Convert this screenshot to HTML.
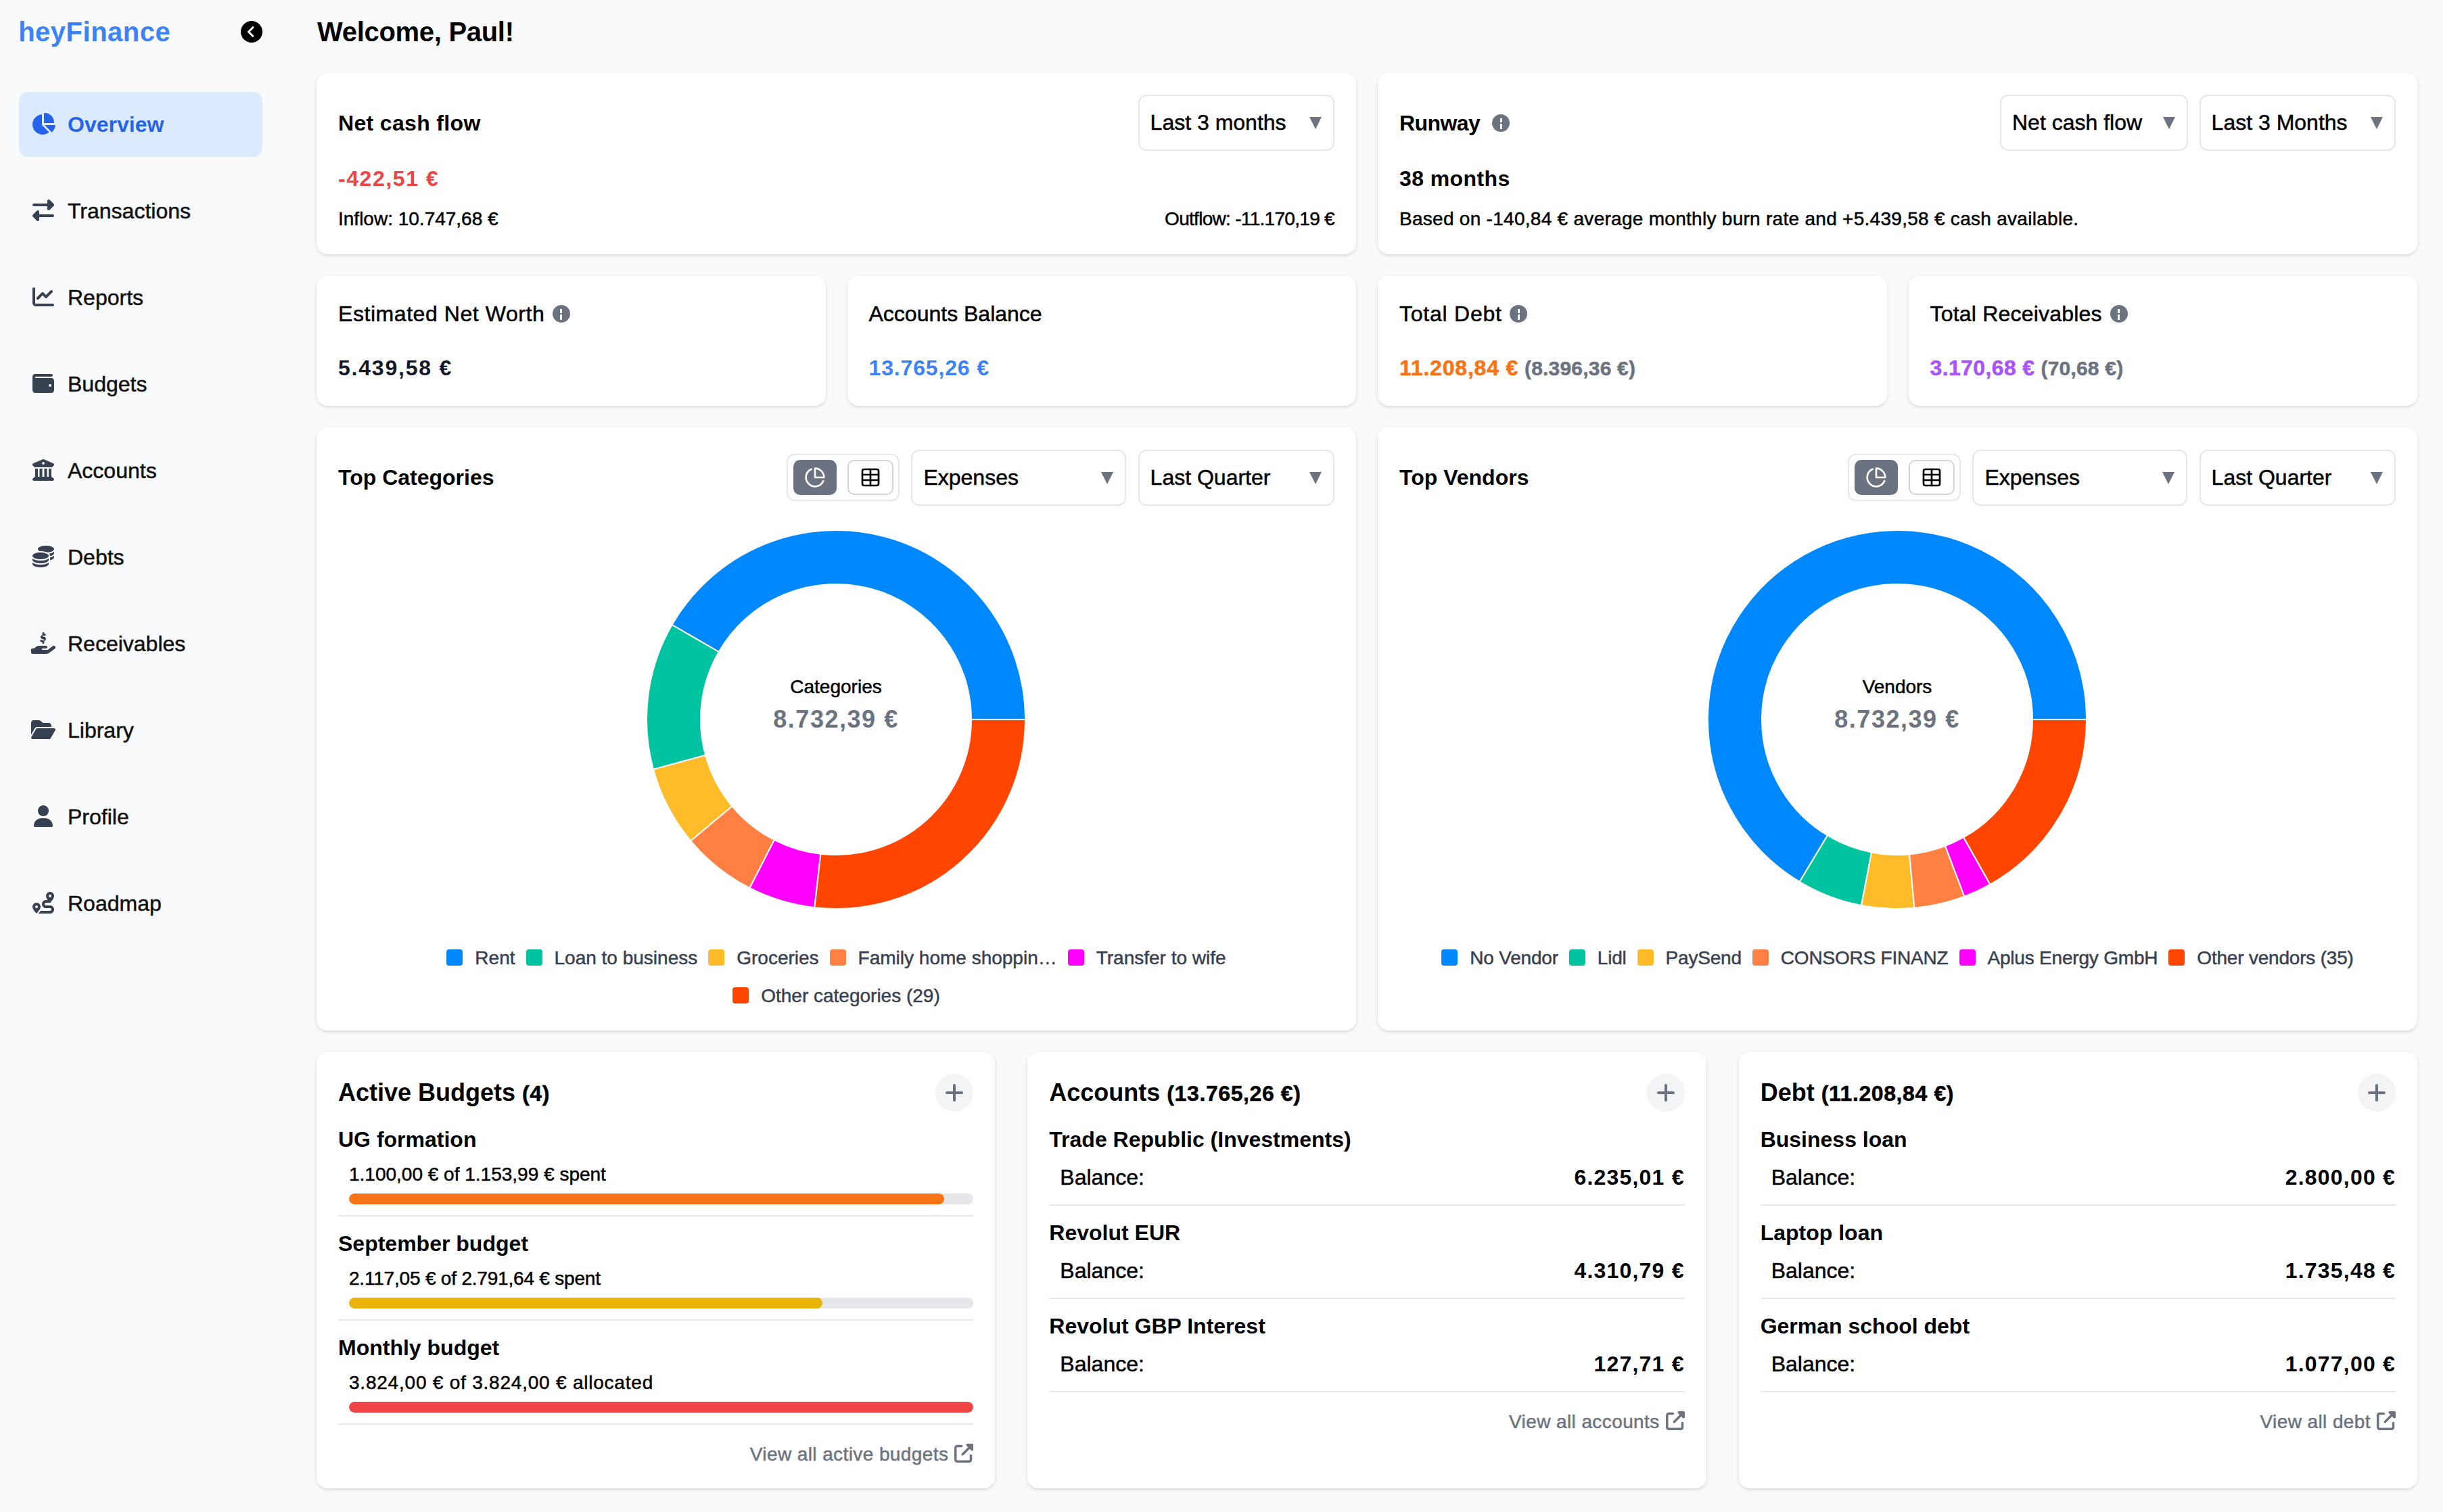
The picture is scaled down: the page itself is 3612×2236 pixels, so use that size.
<!DOCTYPE html>
<html><head><meta charset="utf-8"><style>
*{box-sizing:border-box;margin:0;padding:0}
html,body{width:1806px;height:1118px;overflow:hidden}
@media (min-width:3000px){html{zoom:2}}
body{background:#f9fafb;font-family:"Liberation Sans",sans-serif;color:#000;position:relative}
body *{-webkit-text-stroke:0.25px currentColor}
[style*="font-weight:bold"],.logo,.welcome,.title,.ctr2,.c4 .h,.nm,.bal b,.nav.active .tx{-webkit-text-stroke:0}
.abs{position:absolute}
.logo{left:13.6px;top:9.5px;font-size:20px;font-weight:bold;color:#3b82f6;line-height:28px;letter-spacing:0.25px}
.nav{position:absolute;left:14px;width:180px;height:48px;border-radius:7px}
.nav.active{background:#dbeafe}
.nav svg{position:absolute;left:8px;top:15.5px}
.nav .tx{position:absolute;left:36px;top:12px;font-size:16px;line-height:24px;color:#111}
.nav.active .tx{color:#2563eb;font-weight:bold}
.welcome{left:234.5px;top:9.5px;font-size:20px;font-weight:bold;line-height:28px;color:#000;letter-spacing:-0.15px}
.card{position:absolute;background:#fff;border-radius:8px;box-shadow:0 1px 3px 0 rgba(0,0,0,0.1),0 1px 2px -1px rgba(0,0,0,0.1)}
.title{font-size:16px;font-weight:bold;line-height:24px;color:#000}
.sel{position:absolute;height:41.5px;border:1px solid #e5e7eb;border-radius:6px;background:#fff;font-size:16px;line-height:39.5px;padding-left:8px;color:#000;white-space:nowrap}
.sel .arr{position:absolute;right:8.5px;top:15.5px;width:0;height:0;border-left:4.5px solid transparent;border-right:4.5px solid transparent;border-top:9px solid #6b7280}
.sm{font-size:14px;line-height:20px;color:#000;white-space:nowrap}
.info{display:inline-block;width:13px;height:13px;border-radius:50%;background:#6b7280;position:relative;vertical-align:middle}
.info:before{content:"";position:absolute;left:5.8px;top:3.1px;width:1.4px;height:3.2px;background:#fff}
.info:after{content:"";position:absolute;left:5.8px;top:7.2px;width:1.4px;height:4.1px;background:#fff}
.tg{position:absolute;width:83.5px;height:35.3px;border:1px solid #e5e7eb;border-radius:6px;background:#fff}
.tga{position:absolute;left:3.8px;top:3.7px;width:32px;height:25.8px;border-radius:5px;background:#6b7280}
.tgb{position:absolute;left:44px;top:3.7px;width:33.8px;height:25.8px;border-radius:5px;border:1px solid #d1d5db;background:#fff}
.tga svg,.tgb svg{position:absolute;left:50%;top:50%;margin:-8px 0 0 -8px}
.ctr1{width:200px;text-align:center;font-size:14px;line-height:20px;color:#000}
.ctr2{width:200px;text-align:center;font-size:18px;font-weight:bold;line-height:28px;color:#6b7280;letter-spacing:0.77px}
.leg{text-align:center;font-size:14px;line-height:20px;color:#374151;white-space:nowrap}
.li{display:inline-block;margin:0 4px}
.li i{display:inline-block;width:12px;height:12px;border-radius:2px;vertical-align:-1px;margin-right:9px}
.c4{padding:16px}
.c4 .h{font-size:18px;font-weight:bold;line-height:28px;color:#000}
.plus{position:absolute;right:16px;top:16px;width:28px;height:28px;border-radius:50%;background:#f3f4f6}
.plus svg{position:absolute;left:7px;top:6px}
.it{margin-top:8px;padding-bottom:8px;border-bottom:1px solid #e5e7eb}
.nm{font-size:16px;font-weight:bold;line-height:24px;color:#000}
.bt{margin-top:4px;padding-left:8px;font-size:14px;line-height:20px;color:#000}
.bar{margin:4px 0 0 8px;height:8px;border-radius:4px;background:#e5e7eb;overflow:hidden}
.bar div{height:8px;border-radius:4px}
.bal{margin-top:4px;padding-left:8px;display:flex;justify-content:space-between;font-size:16px;line-height:24px;color:#000}
.bal b{font-weight:bold;letter-spacing:0.6px}
.hp{font-size:16px;letter-spacing:0.3px}
.va{margin-top:12px;text-align:right;font-size:14px;line-height:20px;color:#6b7280;letter-spacing:0.2px}
.va svg{vertical-align:-1.5px;margin-left:4.5px}
</style></head><body>
<div class="abs logo">heyFinance</div><svg style="position:absolute;left:178px;top:15.5px" width="16" height="16" viewBox="0 0 512 512"><path fill="#000" d="M512 256A256 256 0 1 0 0 256a256 256 0 1 0 512 0zM271 135c9.4-9.4 24.6-9.4 33.9 0s9.4 24.6 0 33.9l-87 87 87 87c9.4 9.4 9.4 24.6 0 33.9s-24.6 9.4-33.9 0L167 273c-9.4-9.4-9.4-24.6 0-33.9L271 135z"/></svg><div class="nav active" style="top:68px"><svg style="" width="20" height="16" viewBox="0 0 576 512"><path fill="#2563eb" d="M304 240V16.6c0-9 7-16.6 16-16.6C443.7 0 544 100.3 544 224c0 9-7.6 16-16.6 16H304zM32 272C32 150.7 122.1 50.3 239 34.3c9.2-1.3 17 6.1 17 15.4V288L412.5 444.5c6.7 6.7 6.2 17.7-1.5 23.1C371.8 495.6 323.8 512 272 512C139.5 512 32 404.6 32 272zm526.4 16c9.3 0 16.6 7.8 15.4 17c-7.7 55.9-34.6 105.6-73.9 142.3c-6 5.6-15.4 5.2-21.2-.7L320 288H558.4z"/></svg><div class="tx">Overview</div></div><div class="nav" style="top:132px"><svg style="" width="20" height="16" viewBox="0 0 512 512"><path fill="#374151" d="M32 96l320 0V32c0-12.9 7.8-24.6 19.8-29.6s25.7-2.2 34.9 6.9l96 96c6 6 9.4 14.1 9.4 22.6s-3.4 16.6-9.4 22.6l-96 96c-9.2 9.2-22.9 11.9-34.9 6.9s-19.8-16.6-19.8-29.6V160L32 160c-17.7 0-32-14.3-32-32s14.3-32 32-32zM480 352c17.7 0 32 14.3 32 32s-14.3 32-32 32H160v64c0 12.9-7.8 24.6-19.8 29.6s-25.7 2.2-34.9-6.9l-96-96c-6-6-9.4-14.1-9.4-22.6s3.4-16.6 9.4-22.6l96-96c9.2-9.2 22.9-11.9 34.9-6.9s19.8 16.6 19.8 29.6l0 64H480z"/></svg><div class="tx">Transactions</div></div><div class="nav" style="top:196px"><svg style="" width="20" height="16" viewBox="0 0 512 512"><path fill="#374151" d="M64 64c0-17.7-14.3-32-32-32S0 46.3 0 64V400c0 44.2 35.8 80 80 80H480c17.7 0 32-14.3 32-32s-14.3-32-32-32H80c-8.8 0-16-7.2-16-16V64zm406.6 86.6c12.5-12.5 12.5-32.8 0-45.3s-32.8-12.5-45.3 0L320 210.7l-57.4-57.4c-12.5-12.5-32.8-12.5-45.3 0l-112 112c-12.5 12.5-12.5 32.8 0 45.3s32.8 12.5 45.3 0L240 221.3l57.4 57.4c12.5 12.5 32.8 12.5 45.3 0l128-128z"/></svg><div class="tx">Reports</div></div><div class="nav" style="top:260px"><svg style="" width="20" height="16" viewBox="0 0 512 512"><path fill="#374151" d="M64 32C28.7 32 0 60.7 0 96V416c0 35.3 28.7 64 64 64H448c35.3 0 64-28.7 64-64V192c0-35.3-28.7-64-64-64H80c-8.8 0-16-7.2-16-16s7.2-16 16-16H448c17.7 0 32-14.3 32-32s-14.3-32-32-32H64zM416 272a32 32 0 1 1 0 64 32 32 0 1 1 0-64z"/></svg><div class="tx">Budgets</div></div><div class="nav" style="top:324px"><svg style="" width="20" height="16" viewBox="0 0 512 512"><path fill="#374151" d="M243.4 2.6l-224 96c-14 6-21.8 21-18.7 35.8S16.8 160 32 160v8c0 13.3 10.7 24 24 24H456c13.3 0 24-10.7 24-24v-8c15.2 0 28.3-10.7 31.3-25.6s-4.8-29.9-18.7-35.8l-224-96c-8-3.4-17.2-3.4-25.2 0zM128 224H64V420.3c-.6 .3-1.200 .7-1.8 1.1l-48 32c-11.7 7.8-17 22.4-12.9 35.9S17.9 512 32 512H480c14.1 0 26.5-9.2 30.6-22.7s-1.1-28.1-12.9-35.9l-48-32c-.6-.4-1.2-.7-1.8-1.1V224H384V416H344V224H280V416H232V224H168V416H128V224zM256 64a32 32 0 1 1 0 64 32 32 0 1 1 0-64z"/></svg><div class="tx">Accounts</div></div><div class="nav" style="top:388px"><svg style="" width="20" height="16" viewBox="0 0 512 512"><path fill="#374151" d="M512 80c0 18-14.3 34.6-38.4 48c-29.1 16.1-72.5 27.5-122.3 30.9c-3.7-1.8-7.4-3.5-11.3-5C300.6 137.4 248.2 128 192 128c-8.3 0-16.4 .2-24.5 .6l-1.1-.6C142.3 114.6 128 98 128 80c0-44.2 86-80 192-80S512 35.8 512 80zM160.7 161.1c10.2-.7 20.7-1.1 31.3-1.1c62.2 0 117.4 12.3 152.5 31.4C369.3 204.9 384 221.7 384 240c0 4-.7 7.9-2.1 11.7c-4.6 13.200-17 25.3-35 35.5c0 0 0 0 0 0c-.1 .1-.3 .1-.4 .2l0 0 0 0c-.3 .2-.6 .3-.9 .5c-35 19.4-90.8 32-153.6 32c-59.6 0-112.9-11.3-148.2-29.1c-1.9-.9-3.7-1.9-5.5-2.9C14.3 274.6 0 258 0 240c0-34.8 53.4-64.5 128-75.4c10.5-1.5 21.4-2.7 32.7-3.5zM416 240c0-21.9-10.6-39.9-24.1-53.4c28.3-4.4 54.2-11.4 76.200-20.5c16.3-6.8 31.5-15.2 43.9-25.5V176c0 19.3-16.5 37.1-43.8 50.9c-14.6 7.4-32.4 13.7-52.4 18.5c.1-1.8 .2-3.5 .2-5.3zm-32 96c0 18-14.3 34.6-38.4 48c-1.8 1-3.6 1.9-5.5 2.9C304.9 404.7 251.6 416 192 416c-62.8 0-118.6-12.6-153.6-32C14.3 370.6 0 354 0 336V300.6c12.5 10.3 27.6 18.7 43.9 25.5C83.4 342.6 135.8 352 192 352s108.6-9.4 148.1-25.9c7.8-3.2 15.3-6.9 22.4-10.9c6.1-3.4 11.8-7.200 17.200-11.2c1.5-1.1 2.9-2.3 4.3-3.4V304v5.7V336zm32 0V304 278.1c19-4.2 36.5-9.5 52.1-16c16.3-6.8 31.5-15.2 43.9-25.5V272c0 10.5-5 21-14.9 30.9c-16.3 16.3-45 29.7-81.3 38.4c.1-1.7 .2-3.5 .2-5.3zM192 448c56.2 0 108.6-9.4 148.1-25.9c16.3-6.8 31.5-15.2 43.9-25.5V432c0 44.2-86 80-192 80S0 476.2 0 432V396.6c12.5 10.3 27.6 18.7 43.9 25.5C83.4 438.6 135.8 448 192 448z"/></svg><div class="tx">Debts</div></div><div class="nav" style="top:452px"><svg style="" width="20" height="16" viewBox="0 0 576 512"><path fill="#374151" d="M312 24V34.5c6.4 1.2 12.6 2.7 18.2 4.2c12.8 3.4 20.4 16.6 17 29.4s-16.6 20.4-29.4 17c-10.9-2.9-21.1-4.9-30.2-5c-7.3-.1-14.7 1.7-19.4 4.4c-2.1 1.3-3.1 2.4-3.5 3c-.3 .5-.7 1.2-.7 2.8c0 .3 0 .5 0 .6c.2 .2 .9 1.2 3.3 2.6c5.8 3.5 14.4 6.2 26.4 9.8l.9 .3c10.2 3.1 23.8 7.2 34.6 14c12 7.6 22.6 19.7 22.6 39.4c0 19.6-10.5 33.5-23.2 41.6c-5.9 3.7-12.1 6.2-18.3 7.8V247.5c0 13.3-10.7 24-24 24s-24-10.7-24-24V236.2c-9.6-2.1-18.4-5-26.2-7.6c-2.2-.7-4.4-1.4-6.4-2.1c-12.6-4-19.6-17.5-15.6-30.1s17.5-19.6 30.1-15.6c2.6 .8 5 1.6 7.4 2.4c14.4 4.6 25.1 8.1 36.5 8.6c8 .3 15-1.4 19.1-4c1.7-1.1 2.6-2.1 3-2.8c.4-.6 .9-1.7 .8-3.9l0-.2c0-1.1 0-2.1-3.8-4.5c-5.6-3.5-13.8-6.2-25.8-9.9l-1.3-.4c-9.8-3-22.9-6.9-33.3-13.3c-12-7.3-23.3-19.2-23.4-38.8c-.1-20.6 11.5-34.8 24.6-42.7c5.5-3.3 11.4-5.6 17.2-7.2V24c0-13.3 10.7-24 24-24s24 10.7 24 24zM568.2 336.3c13.1 17.8 9.3 42.8-8.5 55.9L433.1 485.5c-23.4 17.2-51.6 26.5-80.7 26.5H192 32c-17.7 0-32-14.3-32-32V416c0-17.7 14.3-32 32-32H68.8l44.9-36c22.7-18.2 50.9-28 80-28H272h16 64c17.7 0 32 14.3 32 32s-14.3 32-32 32H288 272c-8.8 0-16 7.2-16 16s7.2 16 16 16H392.6l119.7-88.2c17.8-13.1 42.8-9.3 55.9 8.5zM193.6 384l0 0-.9 0c.3 0 .6 0 .9 0z"/></svg><div class="tx">Receivables</div></div><div class="nav" style="top:516px"><svg style="" width="20" height="16" viewBox="0 0 576 512"><path fill="#374151" d="M88.7 223.8L0 375.8V96C0 60.7 28.7 32 64 32H181.5c17 0 33.3 6.7 45.3 18.7l26.5 26.5c12 12 28.3 18.7 45.3 18.7H416c35.3 0 64 28.7 64 64v32H144c-22.8 0-43.8 12.1-55.3 31.8zm27.6 16.1C122.1 230 132.6 224 144 224H544c11.5 0 22 6.1 27.7 16.1s5.7 22.2-.1 32.1l-112 192C453.9 474 443.4 480 432 480H32c-11.5 0-22-6.1-27.7-16.1s-5.7-22.2 .1-32.1l112-192z"/></svg><div class="tx">Library</div></div><div class="nav" style="top:580px"><svg style="" width="20" height="16" viewBox="0 0 448 512"><path fill="#374151" d="M224 256A128 128 0 1 0 224 0a128 128 0 1 0 0 256zm-45.7 48C79.8 304 0 383.8 0 482.3C0 498.7 13.3 512 29.7 512H418.3c16.4 0 29.7-13.3 29.7-29.7C448 383.8 368.2 304 269.7 304H178.3z"/></svg><div class="tx">Profile</div></div><div class="nav" style="top:644px"><svg style="" width="20" height="16" viewBox="0 0 512 512"><path fill="#374151" d="M512 96c0 50.2-59.1 125.1-84.6 155c-3.8 4.4-9.4 6.1-14.5 5H320c-17.7 0-32 14.3-32 32s14.3 32 32 32h96c53 0 96 43 96 96s-43 96-96 96H139.6c8.7-9.9 19.3-22.6 30-36.8c6.3-8.4 12.8-17.6 19-27.2H416c17.7 0 32-14.3 32-32s-14.3-32-32-32H320c-53 0-96-43-96-96s43-96 96-96h39.8c-21-31.5-39.8-67.7-39.8-96c0-53 43-96 96-96s96 43 96 96zM117.1 489.1c-3.8 4.3-7.2 8.1-10.1 11.3l-1.8 2-.2-.2c-6 4.6-14.6 4-20-1.8C59.8 473 0 402.5 0 352c0-53 43-96 96-96s96 43 96 96c0 30-21.1 67-43.5 97.9c-10.7 14.7-21.7 28-30.8 38.5l-.6 .7zM128 352a32 32 0 1 0 -64 0 32 32 0 1 0 64 0zM416 128a32 32 0 1 0 0-64 32 32 0 1 0 0 64z"/></svg><div class="tx">Roadmap</div></div><div class="abs welcome">Welcome, Paul!</div>
<div class="card" style="left:234px;top:54px;width:768.5px;height:134px">
  <div class="abs title" style="left:16px;top:25px;letter-spacing:0.17px">Net cash flow</div>
  <div class="sel" style="left:607.3px;top:16.2px;width:145px">Last 3 months<span class="arr"></span></div>
  <div class="abs" style="left:16px;top:66px;font-size:16px;font-weight:bold;line-height:24px;color:#ef4444;letter-spacing:0.79px">-422,51 €</div>
  <div class="abs sm" style="left:16px;top:98px">Inflow: 10.747,68 €</div>
  <div class="abs sm" style="right:16px;top:98px;letter-spacing:-0.35px">Outflow: -11.170,19 €</div>
</div>
<div class="card" style="left:1018.5px;top:54px;width:768.5px;height:134px">
  <div class="abs title" style="left:16px;top:25px;letter-spacing:-0.3px">Runway <span class="info" style="margin-left:5px;margin-top:-3px"></span></div>
  <div class="sel" style="left:460px;top:16.2px;width:139px">Net cash flow<span class="arr"></span></div>
  <div class="sel" style="left:607.3px;top:16.2px;width:145px">Last 3 Months<span class="arr"></span></div>
  <div class="abs" style="left:16px;top:66px;font-size:16px;font-weight:bold;line-height:24px;color:#000;letter-spacing:0.2px">38 months</div>
  <div class="abs sm" style="left:16px;top:98px;letter-spacing:0.14px">Based on -140,84 € average monthly burn rate and +5.439,58 € cash available.</div>
</div>
<div class="card" style="left:234px;top:204px;width:376.25px;height:96px">
  <div class="abs" style="left:16px;top:16px;font-size:16px;line-height:24px;letter-spacing:0.28px">Estimated Net Worth <span class="info" style="margin-left:1px;margin-top:-3px"></span></div>
  <div class="abs" style="left:16px;top:56px;font-size:16px;font-weight:bold;line-height:24px;color:#111827;letter-spacing:0.89px">5.439,58 €</div>
</div>
<div class="card" style="left:626.25px;top:204px;width:376.25px;height:96px">
  <div class="abs" style="left:16px;top:16px;font-size:16px;line-height:24px">Accounts Balance</div>
  <div class="abs" style="left:16px;top:56px;font-size:16px;font-weight:bold;line-height:24px;color:#3b82f6;letter-spacing:0.42px">13.765,26 €</div>
</div>
<div class="card" style="left:1018.5px;top:204px;width:376.25px;height:96px">
  <div class="abs" style="left:16px;top:16px;font-size:16px;line-height:24px;letter-spacing:0.38px">Total Debt <span class="info" style="margin-left:1px;margin-top:-3px"></span></div>
  <div class="abs" style="left:16px;top:56px;font-size:16px;font-weight:bold;line-height:24px;color:#f97316"><span style="letter-spacing:0.4px">11.208,84 €</span> <span style="font-size:15px;color:#6b7280;letter-spacing:0.1px">(8.396,36 €)</span></div>
</div>
<div class="card" style="left:1410.75px;top:204px;width:376.25px;height:96px">
  <div class="abs" style="left:16px;top:16px;font-size:16px;line-height:24px;letter-spacing:0.1px">Total Receivables <span class="info" style="margin-left:1.5px;margin-top:-3px"></span></div>
  <div class="abs" style="left:16px;top:56px;font-size:16px;font-weight:bold;line-height:24px;color:#a855f7"><span style="letter-spacing:0.19px">3.170,68 €</span> <span style="font-size:15px;color:#6b7280;letter-spacing:0.1px">(70,68 €)</span></div>
</div>
<div class="card" style="left:234px;top:315.8px;width:768.5px;height:446px">
  <div class="abs title" style="left:16px;top:25px">Top Categories</div>
  <div class="tg" style="left:347.7px;top:19.5px"><div class="tga"><svg width="16" height="16" viewBox="0 0 24 24" fill="none" stroke="#fff" stroke-width="2" stroke-linecap="round" stroke-linejoin="round"><path d="M21.21 15.89A10 10 0 1 1 8 2.83"/><path d="M22 12A10 10 0 0 0 12 2v10z"/></svg></div><div class="tgb"><svg width="16" height="16" viewBox="0 0 24 24" fill="none" stroke="#000" stroke-width="2" stroke-linecap="round" stroke-linejoin="round"><path d="M12 3v18"/><rect width="18" height="18" x="3" y="3" rx="2"/><path d="M3 9h18"/><path d="M3 15h18"/></svg></div></div>
  <div class="sel" style="left:439.7px;top:16.6px;width:159px">Expenses<span class="arr"></span></div>
  <div class="sel" style="left:607.3px;top:16.6px;width:145px">Last Quarter<span class="arr"></span></div>
  <svg class="abs" style="left:234px;top:66px" width="300" height="300" viewBox="0 0 300 300"><path d="M290.00 150.00A140 140 0 0 0 28.76 80.00L63.40 100.00A100 100 0 0 1 250.00 150.00Z" fill="#0088FE" stroke="#fff" stroke-width="1"/><path d="M28.76 80.00A140 140 0 0 0 14.96 186.94L53.54 176.39A100 100 0 0 1 63.40 100.00Z" fill="#00C49F" stroke="#fff" stroke-width="1"/><path d="M14.96 186.94A140 140 0 0 0 42.60 239.80L73.28 214.14A100 100 0 0 1 53.54 176.39Z" fill="#FFBB28" stroke="#fff" stroke-width="1"/><path d="M42.60 239.80A140 140 0 0 0 86.22 274.63L104.45 239.02A100 100 0 0 1 73.28 214.14Z" fill="#FF8042" stroke="#fff" stroke-width="1"/><path d="M86.22 274.63A140 140 0 0 0 134.15 289.10L138.68 249.36A100 100 0 0 1 104.45 239.02Z" fill="#FF00FF" stroke="#fff" stroke-width="1"/><path d="M134.15 289.10A140 140 0 0 0 290.00 150.00L250.00 150.00A100 100 0 0 1 138.68 249.36Z" fill="#FF4500" stroke="#fff" stroke-width="1"/></svg>
  <div class="abs ctr1" style="left:284px;top:182.2px">Categories</div>
  <div class="abs ctr2" style="left:284px;top:202px">8.732,39 €</div>
  <div class="abs leg" style="left:0;top:382.5px;width:768.5px"><span class="li"><i style="background:#0088FE"></i>Rent</span><span class="li"><i style="background:#00C49F"></i>Loan to business</span><span class="li"><i style="background:#FFBB28"></i>Groceries</span><span class="li"><i style="background:#FF8042"></i>Family home shoppin…</span><span class="li"><i style="background:#FF00FF"></i>Transfer to wife</span></div><div class="abs leg" style="left:0;top:410.5px;width:768.5px"><span class="li"><i style="background:#FF4500"></i>Other categories (29)</span></div>
</div><div class="card" style="left:1018.5px;top:315.8px;width:768.5px;height:446px">
  <div class="abs title" style="left:16px;top:25px">Top Vendors</div>
  <div class="tg" style="left:347.7px;top:19.5px"><div class="tga"><svg width="16" height="16" viewBox="0 0 24 24" fill="none" stroke="#fff" stroke-width="2" stroke-linecap="round" stroke-linejoin="round"><path d="M21.21 15.89A10 10 0 1 1 8 2.83"/><path d="M22 12A10 10 0 0 0 12 2v10z"/></svg></div><div class="tgb"><svg width="16" height="16" viewBox="0 0 24 24" fill="none" stroke="#000" stroke-width="2" stroke-linecap="round" stroke-linejoin="round"><path d="M12 3v18"/><rect width="18" height="18" x="3" y="3" rx="2"/><path d="M3 9h18"/><path d="M3 15h18"/></svg></div></div>
  <div class="sel" style="left:439.7px;top:16.6px;width:159px">Expenses<span class="arr"></span></div>
  <div class="sel" style="left:607.3px;top:16.6px;width:145px">Last Quarter<span class="arr"></span></div>
  <svg class="abs" style="left:234px;top:66px" width="300" height="300" viewBox="0 0 300 300"><path d="M290.00 150.00A140 140 0 1 0 77.89 270.00L98.50 235.72A100 100 0 1 1 250.00 150.00Z" fill="#0088FE" stroke="#fff" stroke-width="1"/><path d="M77.89 270.00A140 140 0 0 0 123.53 287.47L131.09 248.20A100 100 0 0 1 98.50 235.72Z" fill="#00C49F" stroke="#fff" stroke-width="1"/><path d="M123.53 287.47A140 140 0 0 0 162.69 289.42L159.06 249.59A100 100 0 0 1 131.09 248.20Z" fill="#FFBB28" stroke="#fff" stroke-width="1"/><path d="M162.69 289.42A140 140 0 0 0 199.71 280.88L185.51 243.48A100 100 0 0 1 159.06 249.59Z" fill="#FF8042" stroke="#fff" stroke-width="1"/><path d="M199.71 280.88A140 140 0 0 0 218.73 271.97L199.09 237.12A100 100 0 0 1 185.51 243.48Z" fill="#FF00FF" stroke="#fff" stroke-width="1"/><path d="M218.73 271.97A140 140 0 0 0 290.00 150.00L250.00 150.00A100 100 0 0 1 199.09 237.12Z" fill="#FF4500" stroke="#fff" stroke-width="1"/></svg>
  <div class="abs ctr1" style="left:284px;top:182.2px">Vendors</div>
  <div class="abs ctr2" style="left:284px;top:202px">8.732,39 €</div>
  <div class="abs leg" style="letter-spacing:-0.1px;left:0;top:382.5px;width:768.5px"><span class="li"><i style="background:#0088FE"></i>No Vendor</span><span class="li"><i style="background:#00C49F"></i>Lidl</span><span class="li"><i style="background:#FFBB28"></i>PaySend</span><span class="li"><i style="background:#FF8042"></i>CONSORS FINANZ</span><span class="li"><i style="background:#FF00FF"></i>Aplus Energy GmbH</span><span class="li"><i style="background:#FF4500"></i>Other vendors (35)</span></div>
</div>
<div class="card c4" style="left:234px;top:778px;width:501.67px;height:322.7px">
  <div class="h">Active Budgets <span class="hp">(4)</span></div><div class="plus"><svg style="" width="14" height="16" viewBox="0 0 448 512"><path fill="#6b7280" d="M256 80c0-17.7-14.3-32-32-32s-32 14.3-32 32V224H48c-17.7 0-32 14.3-32 32s14.3 32 32 32H192V432c0 17.7 14.3 32 32 32s32-14.3 32-32V288H400c17.7 0 32-14.3 32-32s-14.3-32-32-32H256V80z"/></svg></div>
  <div class="it"><div class="nm">UG formation</div><div class="bt">1.100,00 € of 1.153,99 € spent</div><div class="bar"><div style="width:95.32%;background:#f97316"></div></div></div>
  <div class="it"><div class="nm">September budget</div><div class="bt" style="letter-spacing:-0.1px">2.117,05 € of 2.791,64 € spent</div><div class="bar"><div style="width:75.84%;background:#eab308"></div></div></div>
  <div class="it"><div class="nm">Monthly budget</div><div class="bt" style="letter-spacing:0.39px">3.824,00 € of 3.824,00 € allocated</div><div class="bar"><div style="width:100%;background:#ef4444"></div></div></div>
  <div class="va">View all active budgets<svg style="" width="14" height="14" viewBox="0 0 512 512"><path fill="#6b7280" d="M352 0c-12.9 0-24.6 7.8-29.6 19.8s-2.2 25.7 6.9 34.9L370.7 96 201.4 265.4c-12.5 12.5-12.5 32.8 0 45.3s32.8 12.5 45.3 0L416 141.3l41.4 41.4c9.2 9.2 22.9 11.9 34.9 6.9s19.8-16.6 19.8-29.6V32c0-17.7-14.3-32-32-32H352zM80 32C35.8 32 0 67.8 0 112V432c0 44.2 35.8 80 80 80H400c44.2 0 80-35.8 80-80V320c0-17.7-14.3-32-32-32s-32 14.3-32 32V432c0 8.8-7.2 16-16 16H80c-8.8 0-16-7.2-16-16V112c0-8.8 7.2-16 16-16H192c17.7 0 32-14.3 32-32s-14.3-32-32-32H80z"/></svg></div>
</div>
<div class="card c4" style="left:759.67px;top:778px;width:501.67px;height:322.7px">
  <div class="h">Accounts <span class="hp">(13.765,26 €)</span></div><div class="plus"><svg style="" width="14" height="16" viewBox="0 0 448 512"><path fill="#6b7280" d="M256 80c0-17.7-14.3-32-32-32s-32 14.3-32 32V224H48c-17.7 0-32 14.3-32 32s14.3 32 32 32H192V432c0 17.7 14.3 32 32 32s32-14.3 32-32V288H400c17.7 0 32-14.3 32-32s-14.3-32-32-32H256V80z"/></svg></div>
  <div class="it"><div class="nm">Trade Republic (Investments)</div><div class="bal"><span>Balance:</span><b>6.235,01 €</b></div></div>
  <div class="it"><div class="nm">Revolut EUR</div><div class="bal"><span>Balance:</span><b>4.310,79 €</b></div></div>
  <div class="it"><div class="nm">Revolut GBP Interest</div><div class="bal"><span>Balance:</span><b>127,71 €</b></div></div>
  <div class="va">View all accounts<svg style="" width="14" height="14" viewBox="0 0 512 512"><path fill="#6b7280" d="M352 0c-12.9 0-24.6 7.8-29.6 19.8s-2.2 25.7 6.9 34.9L370.7 96 201.4 265.4c-12.5 12.5-12.5 32.8 0 45.3s32.8 12.5 45.3 0L416 141.3l41.4 41.4c9.2 9.2 22.9 11.9 34.9 6.9s19.8-16.6 19.8-29.6V32c0-17.7-14.3-32-32-32H352zM80 32C35.8 32 0 67.8 0 112V432c0 44.2 35.8 80 80 80H400c44.2 0 80-35.8 80-80V320c0-17.7-14.3-32-32-32s-32 14.3-32 32V432c0 8.8-7.2 16-16 16H80c-8.8 0-16-7.2-16-16V112c0-8.8 7.2-16 16-16H192c17.7 0 32-14.3 32-32s-14.3-32-32-32H80z"/></svg></div>
</div>
<div class="card c4" style="left:1285.33px;top:778px;width:501.67px;height:322.7px">
  <div class="h">Debt <span class="hp">(11.208,84 €)</span></div><div class="plus"><svg style="" width="14" height="16" viewBox="0 0 448 512"><path fill="#6b7280" d="M256 80c0-17.7-14.3-32-32-32s-32 14.3-32 32V224H48c-17.7 0-32 14.3-32 32s14.3 32 32 32H192V432c0 17.7 14.3 32 32 32s32-14.3 32-32V288H400c17.7 0 32-14.3 32-32s-14.3-32-32-32H256V80z"/></svg></div>
  <div class="it"><div class="nm">Business loan</div><div class="bal"><span>Balance:</span><b>2.800,00 €</b></div></div>
  <div class="it"><div class="nm">Laptop loan</div><div class="bal"><span>Balance:</span><b>1.735,48 €</b></div></div>
  <div class="it"><div class="nm">German school debt</div><div class="bal"><span>Balance:</span><b>1.077,00 €</b></div></div>
  <div class="va">View all debt<svg style="" width="14" height="14" viewBox="0 0 512 512"><path fill="#6b7280" d="M352 0c-12.9 0-24.6 7.8-29.6 19.8s-2.2 25.7 6.9 34.9L370.7 96 201.4 265.4c-12.5 12.5-12.5 32.8 0 45.3s32.8 12.5 45.3 0L416 141.3l41.4 41.4c9.2 9.2 22.9 11.9 34.9 6.9s19.8-16.6 19.8-29.6V32c0-17.7-14.3-32-32-32H352zM80 32C35.8 32 0 67.8 0 112V432c0 44.2 35.8 80 80 80H400c44.2 0 80-35.8 80-80V320c0-17.7-14.3-32-32-32s-32 14.3-32 32V432c0 8.8-7.2 16-16 16H80c-8.8 0-16-7.2-16-16V112c0-8.8 7.2-16 16-16H192c17.7 0 32-14.3 32-32s-14.3-32-32-32H80z"/></svg></div>
</div>

</body></html>
